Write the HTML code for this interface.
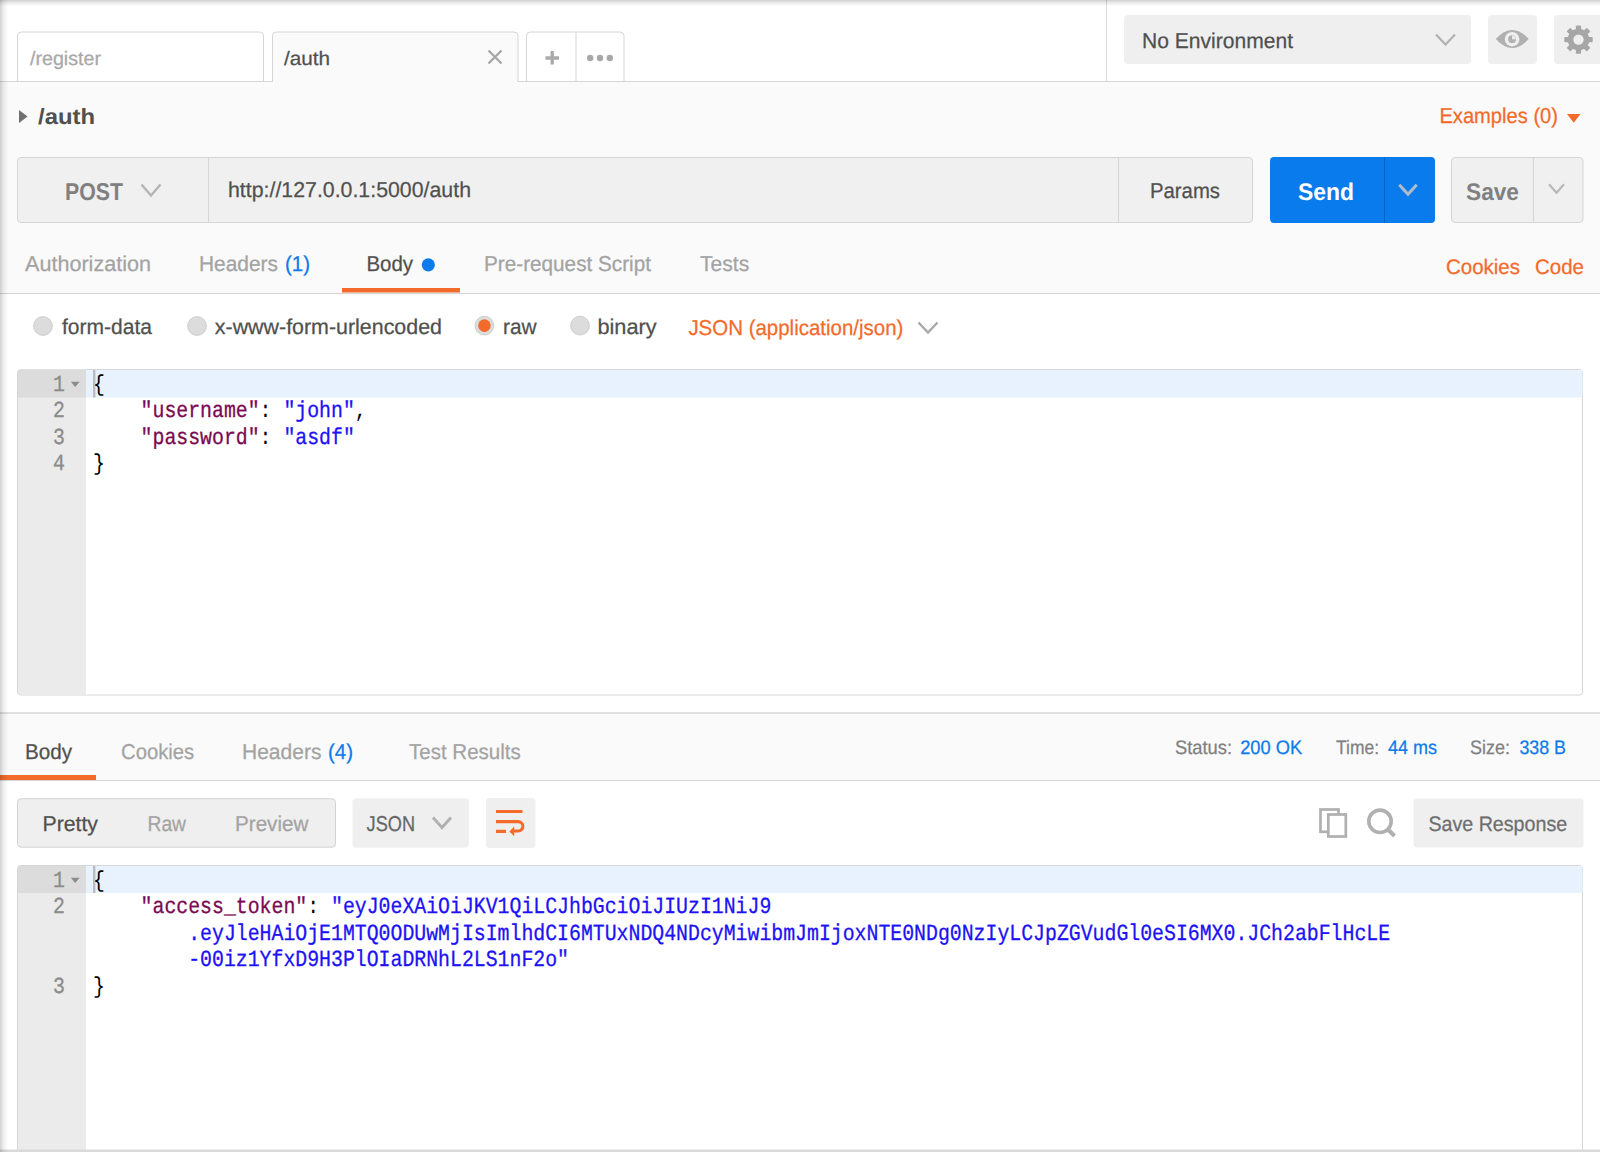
<!DOCTYPE html>
<html><head><meta charset="utf-8"><title>Postman</title>
<style>
html,body{margin:0;padding:0;width:1600px;height:1152px;overflow:hidden;background:#fafafa;}
svg{display:block;}
text{font-family:'Liberation Sans', sans-serif;}
text.m{font-family:'Liberation Mono', monospace;}
</style></head><body>
<svg width="1600" height="1152" viewBox="0 0 1600 1152" text-rendering="geometricPrecision">
<rect x="0" y="0" width="1600" height="1152" fill="#fafafa"/>
<rect x="0" y="0" width="1600" height="81.5" fill="#ffffff"/>
<rect x="0" y="81" width="1600" height="1" fill="#d6d6d6"/>
<rect x="1106" y="0" width="1" height="81" fill="#dcdcdc"/>
<path d="M17.5,82 V36 a4,4 0 0 1 4,-4 H259.5 a4,4 0 0 1 4,4 V82" fill="#ffffff" stroke="#d6d6d6" stroke-width="1"/>
<path d="M272.5,82 V36 a4,4 0 0 1 4,-4 H514 a4,4 0 0 1 4,4 V82" fill="#fafafa" stroke="#d6d6d6" stroke-width="1"/>
<path d="M526.5,82 V36 a4,4 0 0 1 4,-4 H620 a4,4 0 0 1 4,4 V82" fill="#ffffff" stroke="#d6d6d6" stroke-width="1"/>
<rect x="575.5" y="32" width="1" height="50" fill="#d6d6d6"/>
<rect x="0" y="81" width="1600" height="1" fill="#d6d6d6"/>
<rect x="273" y="81" width="244.5" height="2" fill="#fafafa"/>
<path d="M488.5,50.5 L501.5,63.5 M501.5,50.5 L488.5,63.5" stroke="#a6a6a6" stroke-width="2.3" fill="none"/>
<path d="M545.5,58 H559 M552.2,51 V64.5" stroke="#aaaaaa" stroke-width="3.3" fill="none"/>
<circle cx="590.2" cy="58" r="3.2" fill="#a8a8a8"/>
<circle cx="600" cy="58" r="3.2" fill="#a8a8a8"/>
<circle cx="609.8" cy="58" r="3.2" fill="#a8a8a8"/>
<rect x="1124" y="15" width="347" height="49" rx="4" fill="#efefef"/>
<path d="M1436.00,34.50 L1445.50,44.50 L1455.00,34.50" fill="none" stroke="#b4b4b4" stroke-width="2.4"/>
<rect x="1488" y="15" width="49" height="49" rx="4" fill="#efefef"/>
<path d="M1495.8,39 Q1512.2,21 1528.7,39 Q1512.2,57 1495.8,39 Z" fill="#b0b0b0"/>
<circle cx="1512.1" cy="39.2" r="7.3" fill="#efefef"/>
<circle cx="1512.1" cy="39.2" r="3.9" fill="#b0b0b0"/>
<path d="M1512.1,39.2 V35.6 A3.6,3.6 0 0 1 1515.7,39.2 Z" fill="#efefef"/>
<rect x="1554" y="15" width="60" height="49" rx="4" fill="#efefef"/>
<circle cx="1578.5" cy="39.6" r="10.8" fill="#a6a6a6"/>
<rect x="1575.90" y="25.40" width="5.2" height="6" rx="0.8" fill="#a6a6a6" transform="rotate(0 1578.5 39.6)"/>
<rect x="1575.90" y="25.40" width="5.2" height="6" rx="0.8" fill="#a6a6a6" transform="rotate(45 1578.5 39.6)"/>
<rect x="1575.90" y="25.40" width="5.2" height="6" rx="0.8" fill="#a6a6a6" transform="rotate(90 1578.5 39.6)"/>
<rect x="1575.90" y="25.40" width="5.2" height="6" rx="0.8" fill="#a6a6a6" transform="rotate(135 1578.5 39.6)"/>
<rect x="1575.90" y="25.40" width="5.2" height="6" rx="0.8" fill="#a6a6a6" transform="rotate(180 1578.5 39.6)"/>
<rect x="1575.90" y="25.40" width="5.2" height="6" rx="0.8" fill="#a6a6a6" transform="rotate(225 1578.5 39.6)"/>
<rect x="1575.90" y="25.40" width="5.2" height="6" rx="0.8" fill="#a6a6a6" transform="rotate(270 1578.5 39.6)"/>
<rect x="1575.90" y="25.40" width="5.2" height="6" rx="0.8" fill="#a6a6a6" transform="rotate(315 1578.5 39.6)"/>
<circle cx="1578.5" cy="39.6" r="5.2" fill="#efefef"/>
<path d="M19,110 L27.5,116.5 L19,123 Z" fill="#707070"/>
<path d="M1567,114 H1580.5 L1573.75,122.8 Z" fill="#f26b2b"/>
<rect x="17.5" y="157.5" width="1235" height="65" rx="3.5" fill="#f0f0f0" stroke="#d6d6d6" stroke-width="1"/>
<rect x="208" y="158" width="1" height="64" fill="#d6d6d6"/>
<rect x="1118" y="158" width="1" height="64" fill="#d6d6d6"/>
<path d="M141.50,184.50 L151.00,195.50 L160.50,184.50" fill="none" stroke="#b4b4b4" stroke-width="2.4"/>
<rect x="1270" y="157" width="165" height="66" rx="4" fill="#097bed"/>
<rect x="1384" y="157" width="1" height="66" fill="#0a63bd"/>
<path d="M1399.25,184.75 L1408.00,194.25 L1416.75,184.75" fill="none" stroke="#b3bccb" stroke-width="3"/>
<rect x="1451.5" y="157.5" width="131.5" height="65" rx="3.5" fill="#f0f0f0" stroke="#d6d6d6" stroke-width="1"/>
<rect x="1533" y="158" width="1" height="64" fill="#d6d6d6"/>
<path d="M1549.00,184.25 L1556.50,192.75 L1564.00,184.25" fill="none" stroke="#b8b8b8" stroke-width="2.2"/>
<rect x="0" y="293" width="1600" height="420" fill="#ffffff"/>
<rect x="0" y="293" width="1600" height="1" fill="#d4d4d4"/>
<rect x="342" y="288" width="118" height="4.5" fill="#f26b2b"/>
<circle cx="428.3" cy="264.8" r="6.6" fill="#0d7bea"/>
<circle cx="43" cy="326" r="9.4" fill="#dcdcdc" stroke="#c6c6c6" stroke-width="0.8"/>
<circle cx="197" cy="326" r="9.4" fill="#dcdcdc" stroke="#c6c6c6" stroke-width="0.8"/>
<circle cx="484.4" cy="325.6" r="9.4" fill="#dcdcdc" stroke="#c6c6c6" stroke-width="0.8"/>
<circle cx="484.4" cy="325.6" r="6.3" fill="#f26b2b"/>
<circle cx="580" cy="325.6" r="9.4" fill="#dcdcdc" stroke="#c6c6c6" stroke-width="0.8"/>
<path d="M918.50,322.50 L928.00,332.50 L937.50,322.50" fill="none" stroke="#a8a8a8" stroke-width="2.4"/>
<rect x="17.5" y="369.5" width="1565" height="325.5" rx="3" fill="#ffffff" stroke="#d6d6d6" stroke-width="1"/>
<path d="M18,372.5 a3,3 0 0 1 3,-3 H86 V694.5 H21 a3,3 0 0 1 -3,-3 Z" fill="#ebebeb"/>
<rect x="18" y="370" width="68" height="27.5" fill="#dcdcdc"/>
<rect x="86" y="370" width="1496.5" height="27.5" fill="#e8f2fe"/>
<rect x="93" y="370" width="2.4" height="27.5" fill="#b9bcc2"/>
<rect x="0" y="712.25" width="1600" height="1.5" fill="#d6d6d6"/>
<rect x="0" y="775" width="96" height="5" fill="#f26b2b"/>
<rect x="0" y="780" width="1600" height="1" fill="#d6d6d6"/>
<rect x="0" y="781" width="1600" height="371" fill="#ffffff"/>
<rect x="17.5" y="798.8" width="318" height="48.4" rx="3.5" fill="#efefef" stroke="#d2d2d2" stroke-width="1"/>
<rect x="352.5" y="798.3" width="116.5" height="49.5" rx="4" fill="#efefef"/>
<path d="M433.00,817.50 L442.00,827.50 L451.00,817.50" fill="none" stroke="#b0b0b0" stroke-width="2.9"/>
<rect x="486" y="798" width="49.5" height="50" rx="4" fill="#efefef"/>
<path d="M496,811.5 H522.5 M496,821.6 H518.2 A4.7,4.7 0 0 1 518.2,831 H513.5 M496,831.4 H506" stroke="#f26b2b" stroke-width="3.1" fill="none"/>
<path d="M509.4,831.5 L514.2,826.4 L514.2,836.2 Z" fill="#f26b2b"/>
<rect x="1320.5" y="809.5" width="18" height="22.3" fill="none" stroke="#b0b0b0" stroke-width="2.7"/>
<rect x="1328.3" y="814.5" width="17.5" height="22" fill="#ffffff" stroke="#b0b0b0" stroke-width="2.7"/>
<circle cx="1380" cy="821.3" r="11.2" fill="none" stroke="#b0b0b0" stroke-width="3.6"/>
<path d="M1387.5,829 L1394.5,836" stroke="#b0b0b0" stroke-width="4.2" fill="none"/>
<rect x="1413.5" y="798.5" width="170" height="49" rx="4" fill="#efefef"/>
<path d="M17.5,1152 V868.5 a3,3 0 0 1 3,-3 H1579.5 a3,3 0 0 1 3,3 V1152" fill="#ffffff" stroke="#d6d6d6" stroke-width="1"/>
<path d="M18,869 a3,3 0 0 1 3,-3 H86 V1152 H18 Z" fill="#ebebeb"/>
<rect x="18" y="866" width="68" height="27" fill="#dcdcdc"/>
<rect x="86" y="866" width="1496.5" height="27" fill="#e8f2fe"/>
<rect x="93" y="866" width="2.4" height="27" fill="#b9bcc2"/>
<rect x="0" y="1149.5" width="1600" height="2.5" fill="#dadada"/>
<defs><linearGradient id="gl" x1="0" x2="1" y1="0" y2="0"><stop offset="0" stop-color="#000" stop-opacity="0.18"/><stop offset="0.45" stop-color="#000" stop-opacity="0.06"/><stop offset="1" stop-color="#000" stop-opacity="0"/></linearGradient><linearGradient id="gt" x1="0" x2="0" y1="0" y2="1"><stop offset="0" stop-color="#000" stop-opacity="0.19"/><stop offset="0.4" stop-color="#000" stop-opacity="0.09"/><stop offset="1" stop-color="#000" stop-opacity="0"/></linearGradient></defs>
<rect x="0" y="0" width="8.5" height="1152" fill="url(#gl)"/>
<rect x="0" y="0" width="1600" height="6" fill="url(#gt)"/>
<text class="m" x="65.0" y="390.80" font-size="23" fill="#8c8c8c" stroke="#8c8c8c" stroke-width="0.35" text-anchor="end" textLength="11.90" lengthAdjust="spacingAndGlyphs">1</text>
<text class="m" x="65.0" y="417.25" font-size="23" fill="#8c8c8c" stroke="#8c8c8c" stroke-width="0.35" text-anchor="end" textLength="11.90" lengthAdjust="spacingAndGlyphs">2</text>
<text class="m" x="65.0" y="443.70" font-size="23" fill="#8c8c8c" stroke="#8c8c8c" stroke-width="0.35" text-anchor="end" textLength="11.90" lengthAdjust="spacingAndGlyphs">3</text>
<text class="m" x="65.0" y="470.15" font-size="23" fill="#8c8c8c" stroke="#8c8c8c" stroke-width="0.35" text-anchor="end" textLength="11.90" lengthAdjust="spacingAndGlyphs">4</text>
<path d="M70.8,381.8 H79.6 L75.2,386.9 Z" fill="#8c8c8c"/>
<text class="m" x="93.00" y="390.80" font-size="23" fill="#000000" stroke="#000000" stroke-width="0" textLength="11.90" lengthAdjust="spacingAndGlyphs">{</text>
<text class="m" x="140.60" y="417.25" font-size="23" fill="#7a0a52" stroke="#7a0a52" stroke-width="0.3" textLength="119.00" lengthAdjust="spacingAndGlyphs">"username"</text>
<text class="m" x="259.60" y="417.25" font-size="23" fill="#000000" stroke="#000000" stroke-width="0" textLength="11.90" lengthAdjust="spacingAndGlyphs">:</text>
<text class="m" x="283.40" y="417.25" font-size="23" fill="#1c12f5" stroke="#1c12f5" stroke-width="0.3" textLength="71.40" lengthAdjust="spacingAndGlyphs">"john"</text>
<text class="m" x="354.80" y="417.25" font-size="23" fill="#000000" stroke="#000000" stroke-width="0" textLength="11.90" lengthAdjust="spacingAndGlyphs">,</text>
<text class="m" x="140.60" y="443.70" font-size="23" fill="#7a0a52" stroke="#7a0a52" stroke-width="0.3" textLength="119.00" lengthAdjust="spacingAndGlyphs">"password"</text>
<text class="m" x="259.60" y="443.70" font-size="23" fill="#000000" stroke="#000000" stroke-width="0" textLength="11.90" lengthAdjust="spacingAndGlyphs">:</text>
<text class="m" x="283.40" y="443.70" font-size="23" fill="#1c12f5" stroke="#1c12f5" stroke-width="0.3" textLength="71.40" lengthAdjust="spacingAndGlyphs">"asdf"</text>
<text class="m" x="93.00" y="470.15" font-size="23" fill="#000000" stroke="#000000" stroke-width="0" textLength="11.90" lengthAdjust="spacingAndGlyphs">}</text>
<text class="m" x="65.0" y="886.80" font-size="23" fill="#8c8c8c" stroke="#8c8c8c" stroke-width="0.35" text-anchor="end" textLength="11.90" lengthAdjust="spacingAndGlyphs">1</text>
<text class="m" x="65.0" y="913.25" font-size="23" fill="#8c8c8c" stroke="#8c8c8c" stroke-width="0.35" text-anchor="end" textLength="11.90" lengthAdjust="spacingAndGlyphs">2</text>
<text class="m" x="65.0" y="992.60" font-size="23" fill="#8c8c8c" stroke="#8c8c8c" stroke-width="0.35" text-anchor="end" textLength="11.90" lengthAdjust="spacingAndGlyphs">3</text>
<path d="M70.8,877.8 H79.6 L75.2,882.9 Z" fill="#8c8c8c"/>
<text class="m" x="93.00" y="886.80" font-size="23" fill="#000000" stroke="#000000" stroke-width="0" textLength="11.90" lengthAdjust="spacingAndGlyphs">{</text>
<text class="m" x="140.60" y="913.25" font-size="23" fill="#7a0a52" stroke="#7a0a52" stroke-width="0.3" textLength="166.60" lengthAdjust="spacingAndGlyphs">"access_token"</text>
<text class="m" x="307.20" y="913.25" font-size="23" fill="#000000" stroke="#000000" stroke-width="0" textLength="11.90" lengthAdjust="spacingAndGlyphs">:</text>
<text class="m" x="331.00" y="913.25" font-size="23" fill="#1c12f5" stroke="#1c12f5" stroke-width="0.3" textLength="440.30" lengthAdjust="spacingAndGlyphs">"eyJ0eXAiOiJKV1QiLCJhbGciOiJIUzI1NiJ9</text>
<text class="m" x="188.20" y="939.70" font-size="23" fill="#1c12f5" stroke="#1c12f5" stroke-width="0.3" textLength="1201.90" lengthAdjust="spacingAndGlyphs">.eyJleHAiOjE1MTQ0ODUwMjIsImlhdCI6MTUxNDQ4NDcyMiwibmJmIjoxNTE0NDg0NzIyLCJpZGVudGl0eSI6MX0.JCh2abFlHcLE</text>
<text class="m" x="188.20" y="966.15" font-size="23" fill="#1c12f5" stroke="#1c12f5" stroke-width="0.3" textLength="380.80" lengthAdjust="spacingAndGlyphs">-00iz1YfxD9H3PlOIaDRNhL2LS1nF2o"</text>
<text class="m" x="93.00" y="992.60" font-size="23" fill="#000000" stroke="#000000" stroke-width="0" textLength="11.90" lengthAdjust="spacingAndGlyphs">}</text>
<text x="30.00" y="65" font-size="19.5" fill="#a8a8a8" stroke="#a8a8a8" stroke-width="0.25" font-weight="400" textLength="71.00" lengthAdjust="spacingAndGlyphs">/register</text>
<text x="284.00" y="64.6" font-size="19.5" fill="#505050" stroke="#505050" stroke-width="0.25" font-weight="400" textLength="46.00" lengthAdjust="spacingAndGlyphs">/auth</text>
<text x="1142.00" y="48" font-size="21.5" fill="#505050" stroke="#505050" stroke-width="0.25" font-weight="400" textLength="151.00" lengthAdjust="spacingAndGlyphs">No Environment</text>
<text x="38.00" y="124" font-size="22" fill="#505050" stroke="#505050" stroke-width="0" font-weight="700" textLength="57.00" lengthAdjust="spacingAndGlyphs">/auth</text>
<text x="1439.40" y="123.4" font-size="21.5" fill="#f26b2b" stroke="#f26b2b" stroke-width="0.25" font-weight="400" textLength="118.60" lengthAdjust="spacingAndGlyphs">Examples (0)</text>
<text x="65.00" y="200" font-size="24.5" fill="#808080" stroke="#808080" stroke-width="0" font-weight="700" textLength="58.00" lengthAdjust="spacingAndGlyphs">POST</text>
<text x="228.00" y="197" font-size="21.5" fill="#505050" stroke="#505050" stroke-width="0.25" font-weight="400" textLength="243.00" lengthAdjust="spacingAndGlyphs">http://127.0.0.1:5000/auth</text>
<text x="1150.00" y="198" font-size="21.5" fill="#505050" stroke="#505050" stroke-width="0.25" font-weight="400" textLength="70.00" lengthAdjust="spacingAndGlyphs">Params</text>
<text x="1298.00" y="200" font-size="24" fill="#ffffff" stroke="#ffffff" stroke-width="0" font-weight="700" textLength="56.00" lengthAdjust="spacingAndGlyphs">Send</text>
<text x="1466.00" y="200" font-size="24" fill="#808080" stroke="#808080" stroke-width="0" font-weight="700" textLength="53.00" lengthAdjust="spacingAndGlyphs">Save</text>
<text x="25.00" y="271" font-size="21.5" fill="#a3a3a3" stroke="#a3a3a3" stroke-width="0.25" font-weight="400" textLength="126.00" lengthAdjust="spacingAndGlyphs">Authorization</text>
<text x="199.00" y="271" font-size="21.5" fill="#a3a3a3" stroke="#a3a3a3" stroke-width="0.25" font-weight="400" textLength="79.00" lengthAdjust="spacingAndGlyphs">Headers</text>
<text x="285.00" y="271" font-size="21.5" fill="#0d7bea" stroke="#0d7bea" stroke-width="0.25" font-weight="400" textLength="25.00" lengthAdjust="spacingAndGlyphs">(1)</text>
<text x="366.40" y="271" font-size="21.5" fill="#505050" stroke="#505050" stroke-width="0.25" font-weight="400" textLength="46.60" lengthAdjust="spacingAndGlyphs">Body</text>
<text x="484.00" y="271" font-size="21.5" fill="#a3a3a3" stroke="#a3a3a3" stroke-width="0.25" font-weight="400" textLength="167.00" lengthAdjust="spacingAndGlyphs">Pre-request Script</text>
<text x="700.00" y="271" font-size="21.5" fill="#a3a3a3" stroke="#a3a3a3" stroke-width="0.25" font-weight="400" textLength="49.20" lengthAdjust="spacingAndGlyphs">Tests</text>
<text x="1446.00" y="274" font-size="21" fill="#f26b2b" stroke="#f26b2b" stroke-width="0.25" font-weight="400" textLength="74.00" lengthAdjust="spacingAndGlyphs">Cookies</text>
<text x="1535.00" y="274" font-size="21" fill="#f26b2b" stroke="#f26b2b" stroke-width="0.25" font-weight="400" textLength="49.00" lengthAdjust="spacingAndGlyphs">Code</text>
<text x="62.00" y="334" font-size="21.5" fill="#505050" stroke="#505050" stroke-width="0.25" font-weight="400" textLength="90.00" lengthAdjust="spacingAndGlyphs">form-data</text>
<text x="214.80" y="334" font-size="21.5" fill="#505050" stroke="#505050" stroke-width="0.25" font-weight="400" textLength="227.20" lengthAdjust="spacingAndGlyphs">x-www-form-urlencoded</text>
<text x="503.00" y="334" font-size="21.5" fill="#505050" stroke="#505050" stroke-width="0.25" font-weight="400" textLength="33.60" lengthAdjust="spacingAndGlyphs">raw</text>
<text x="597.40" y="334" font-size="21.5" fill="#505050" stroke="#505050" stroke-width="0.25" font-weight="400" textLength="59.20" lengthAdjust="spacingAndGlyphs">binary</text>
<text x="688.40" y="335" font-size="21.5" fill="#f26b2b" stroke="#f26b2b" stroke-width="0.25" font-weight="400" textLength="215.00" lengthAdjust="spacingAndGlyphs">JSON (application/json)</text>
<text x="25.00" y="758.75" font-size="21.5" fill="#505050" stroke="#505050" stroke-width="0.25" font-weight="400" textLength="47.00" lengthAdjust="spacingAndGlyphs">Body</text>
<text x="121.00" y="758.75" font-size="21.5" fill="#a3a3a3" stroke="#a3a3a3" stroke-width="0.25" font-weight="400" textLength="73.20" lengthAdjust="spacingAndGlyphs">Cookies</text>
<text x="242.00" y="758.75" font-size="21.5" fill="#a3a3a3" stroke="#a3a3a3" stroke-width="0.25" font-weight="400" textLength="79.40" lengthAdjust="spacingAndGlyphs">Headers</text>
<text x="328.00" y="758.75" font-size="21.5" fill="#0d7bea" stroke="#0d7bea" stroke-width="0.25" font-weight="400" textLength="25.00" lengthAdjust="spacingAndGlyphs">(4)</text>
<text x="409.00" y="758.75" font-size="21.5" fill="#a3a3a3" stroke="#a3a3a3" stroke-width="0.25" font-weight="400" textLength="111.80" lengthAdjust="spacingAndGlyphs">Test Results</text>
<text x="1175.00" y="754" font-size="19.5" fill="#808080" stroke="#808080" stroke-width="0.25" font-weight="400" textLength="57.00" lengthAdjust="spacingAndGlyphs">Status:</text>
<text x="1240.20" y="754" font-size="19.5" fill="#0d7bea" stroke="#0d7bea" stroke-width="0.25" font-weight="400" textLength="62.00" lengthAdjust="spacingAndGlyphs">200 OK</text>
<text x="1336.00" y="754" font-size="19.5" fill="#808080" stroke="#808080" stroke-width="0.25" font-weight="400" textLength="43.00" lengthAdjust="spacingAndGlyphs">Time:</text>
<text x="1388.00" y="754" font-size="19.5" fill="#0d7bea" stroke="#0d7bea" stroke-width="0.25" font-weight="400" textLength="49.00" lengthAdjust="spacingAndGlyphs">44 ms</text>
<text x="1470.00" y="754" font-size="19.5" fill="#808080" stroke="#808080" stroke-width="0.25" font-weight="400" textLength="40.00" lengthAdjust="spacingAndGlyphs">Size:</text>
<text x="1519.40" y="754" font-size="19.5" fill="#0d7bea" stroke="#0d7bea" stroke-width="0.25" font-weight="400" textLength="46.60" lengthAdjust="spacingAndGlyphs">338 B</text>
<text x="42.50" y="831" font-size="21.5" fill="#505050" stroke="#505050" stroke-width="0.25" font-weight="400" textLength="55.50" lengthAdjust="spacingAndGlyphs">Pretty</text>
<text x="147.50" y="831" font-size="21.5" fill="#a3a3a3" stroke="#a3a3a3" stroke-width="0.25" font-weight="400" textLength="38.50" lengthAdjust="spacingAndGlyphs">Raw</text>
<text x="235.00" y="831" font-size="21.5" fill="#a3a3a3" stroke="#a3a3a3" stroke-width="0.25" font-weight="400" textLength="73.40" lengthAdjust="spacingAndGlyphs">Preview</text>
<text x="366.60" y="831" font-size="21.5" fill="#666666" stroke="#666666" stroke-width="0.25" font-weight="400" textLength="48.40" lengthAdjust="spacingAndGlyphs">JSON</text>
<text x="1428.40" y="831" font-size="21" fill="#6e6e6e" stroke="#6e6e6e" stroke-width="0.25" font-weight="400" textLength="138.80" lengthAdjust="spacingAndGlyphs">Save Response</text>
</svg>
</body></html>
